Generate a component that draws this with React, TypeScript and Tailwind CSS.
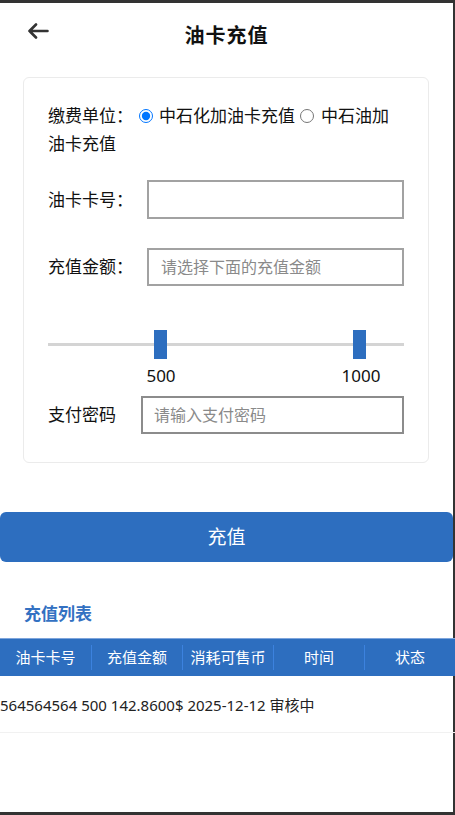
import React from "react";

const font = { fontFamily: '"Noto Sans", "Noto Sans CJK SC", sans-serif' };

export default function App() {
  const records = [
    { card: "564564564", amount: "500", coin: "142.8600$", time: "2025-12-12", status: "审核中" },
  ];
  const columns = ["油卡卡号", "充值金额", "消耗可售币", "时间", "状态"];

  return (
    <div
      className="relative w-[455px] h-[815px] bg-white overflow-hidden text-[#111]"
      style={font}
    >
      {/* window frame */}
      <div className="h-[3px] bg-[#333]"></div>
      <div className="absolute top-0 right-0 bottom-0 w-[2px] bg-[#333]"></div>
      <div className="absolute left-0 right-0 bottom-0 h-[3px] bg-[#333]"></div>

      {/* header */}
      <div className="grid grid-cols-[1fr_auto_1fr] items-start h-[74px] pt-[19px] pr-[2px]">
        <div className="pl-[27px] pt-[1px]">
          <svg width="22" height="16" viewBox="0 0 22 16" fill="none">
            <path
              d="M20.5 8H2.5M9 1.5L2.5 8L9 14.5"
              stroke="#333"
              strokeWidth="2.6"
              strokeLinecap="round"
              strokeLinejoin="round"
            />
          </svg>
        </div>
        <h1 className="text-[20px] leading-[28px] font-bold tracking-[1px] text-[#111]">油卡充值</h1>
        <div></div>
      </div>

      {/* form card */}
      <div className="mx-[23px] w-[406px] border border-[#ebebeb] rounded-[6px] px-[24px] pt-[24px] pb-[28px]">
        <p className="text-[17px] leading-[28px]">
          <span>缴费单位：</span>
          <input
            type="radio"
            name="unit"
            defaultChecked
            className="w-[14px] h-[14px] align-[-1px] ml-[6px] mr-[6px] accent-[#0075ff]"
          />
          <span>中石化加油卡充值</span>
          <input
            type="radio"
            name="unit"
            className="w-[14px] h-[14px] align-[-1px] ml-[5px] mr-[7px]"
          />
          <span>中石油加油卡充值</span>
        </p>

        <div className="flex items-center mt-[22px]">
          <span className="w-[101px] text-[17px]">油卡卡号：</span>
          <input className="flex-1 h-[39px] border-2 border-[#a2a2a2] px-[12px] text-[16px] outline-none" />
        </div>

        <div className="flex items-center mt-[29px]">
          <span className="w-[101px] text-[17px]">充值金额：</span>
          <input
            placeholder="请选择下面的充值金额"
            className="flex-1 h-[38px] border-2 border-[#a2a2a2] px-[12px] text-[16px] outline-none placeholder:text-[#8a8a8a]"
          />
        </div>

        {/* range slider */}
        <div className="relative h-[29px] mt-[44px] flex items-center">
          <div className="w-full h-[3.5px] bg-[#d4d4d4]"></div>
          <div className="absolute top-0 left-[106px] w-[13px] h-[29px] bg-[#2d6ebf]"></div>
          <div className="absolute top-0 left-[305px] w-[13px] h-[29px] bg-[#2d6ebf]"></div>
        </div>
        <div className="flex mt-[6px] text-[17px] leading-[22px]">
          <span className="ml-[92px] w-[42px] text-center">500</span>
          <span className="ml-[157px] w-[44px] text-center">1000</span>
        </div>

        <div className="flex items-center mt-[9px]">
          <span className="w-[93px] text-[17px]">支付密码</span>
          <input
            type="password"
            placeholder="请输入支付密码"
            className="flex-1 h-[38px] border-2 border-[#8c8c8c] px-[11px] text-[16px] outline-none placeholder:text-[#8a8a8a]"
          />
        </div>
      </div>

      <button className="mt-[49px] w-[453px] h-[50px] rounded-[6px] bg-[#2d6ebf] text-white text-[19px]">
        充值
      </button>

      <h2 className="mt-[40px] pl-[24px] text-[17px] leading-[24px] font-bold text-[#3371c2]">充值列表</h2>

      <div className="relative z-10 mt-[12px] w-[455px]">
        <div className="grid grid-cols-5 h-[38px] bg-[#2d6ebf] border-t border-[#7ea5dc] text-white text-[15px]">
          {columns.map((col, i) => (
            <div key={col} className="flex items-center">
              {i !== 0 && <div className="w-px h-[25px] bg-[#3c82de]"></div>}
              <span className="flex-1 text-center">{col}</span>
            </div>
          ))}
        </div>
        {records.map((r, i) => (
          <div key={i} className="h-[57px] flex items-center pt-[3px] border-b border-[#f1f1f1] text-[15px] text-[#222] whitespace-nowrap">
            {r.card} {r.amount} {r.coin} {r.time} {r.status}
          </div>
        ))}
      </div>
    </div>
  );
}
